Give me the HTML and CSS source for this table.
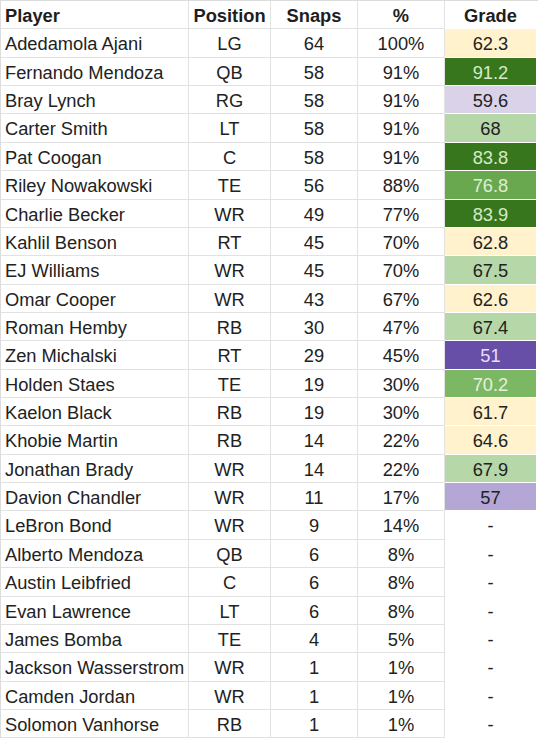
FILE: index.html
```html
<!DOCTYPE html>
<html>
<head>
<meta charset="utf-8">
<link rel="stylesheet" href="styles.css">
</head>
<body>
<div class="sheet">
  <div class="row head"><div class="c name">Player</div><div class="c">Position</div><div class="c">Snaps</div><div class="c">%</div><div class="c g"><span class="gv">Grade</span></div></div>
  <div class="row"><div class="c name">Adedamola Ajani</div><div class="c">LG</div><div class="c">64</div><div class="c">100%</div><div class="c g"><span class="gv y">62.3</span></div></div>
  <div class="row"><div class="c name">Fernando Mendoza</div><div class="c">QB</div><div class="c">58</div><div class="c">91%</div><div class="c g"><span class="gv dg">91.2</span></div></div>
  <div class="row"><div class="c name">Bray Lynch</div><div class="c">RG</div><div class="c">58</div><div class="c">91%</div><div class="c g"><span class="gv lp">59.6</span></div></div>
  <div class="row"><div class="c name">Carter Smith</div><div class="c">LT</div><div class="c">58</div><div class="c">91%</div><div class="c g"><span class="gv lg">68</span></div></div>
  <div class="row"><div class="c name">Pat Coogan</div><div class="c">C</div><div class="c">58</div><div class="c">91%</div><div class="c g"><span class="gv dg">83.8</span></div></div>
  <div class="row"><div class="c name">Riley Nowakowski</div><div class="c">TE</div><div class="c">56</div><div class="c">88%</div><div class="c g"><span class="gv mg">76.8</span></div></div>
  <div class="row"><div class="c name">Charlie Becker</div><div class="c">WR</div><div class="c">49</div><div class="c">77%</div><div class="c g"><span class="gv dg">83.9</span></div></div>
  <div class="row"><div class="c name">Kahlil Benson</div><div class="c">RT</div><div class="c">45</div><div class="c">70%</div><div class="c g"><span class="gv y">62.8</span></div></div>
  <div class="row"><div class="c name">EJ Williams</div><div class="c">WR</div><div class="c">45</div><div class="c">70%</div><div class="c g"><span class="gv lg">67.5</span></div></div>
  <div class="row"><div class="c name">Omar Cooper</div><div class="c">WR</div><div class="c">43</div><div class="c">67%</div><div class="c g"><span class="gv y">62.6</span></div></div>
  <div class="row"><div class="c name">Roman Hemby</div><div class="c">RB</div><div class="c">30</div><div class="c">47%</div><div class="c g"><span class="gv lg">67.4</span></div></div>
  <div class="row"><div class="c name">Zen Michalski</div><div class="c">RT</div><div class="c">29</div><div class="c">45%</div><div class="c g"><span class="gv dp">51</span></div></div>
  <div class="row"><div class="c name">Holden Staes</div><div class="c">TE</div><div class="c">19</div><div class="c">30%</div><div class="c g"><span class="gv mg2">70.2</span></div></div>
  <div class="row"><div class="c name">Kaelon Black</div><div class="c">RB</div><div class="c">19</div><div class="c">30%</div><div class="c g"><span class="gv y">61.7</span></div></div>
  <div class="row"><div class="c name">Khobie Martin</div><div class="c">RB</div><div class="c">14</div><div class="c">22%</div><div class="c g"><span class="gv y">64.6</span></div></div>
  <div class="row"><div class="c name">Jonathan Brady</div><div class="c">WR</div><div class="c">14</div><div class="c">22%</div><div class="c g"><span class="gv lg">67.9</span></div></div>
  <div class="row"><div class="c name">Davion Chandler</div><div class="c">WR</div><div class="c">11</div><div class="c">17%</div><div class="c g"><span class="gv mp">57</span></div></div>
  <div class="row"><div class="c name">LeBron Bond</div><div class="c">WR</div><div class="c">9</div><div class="c">14%</div><div class="c g"><span class="gv">-</span></div></div>
  <div class="row"><div class="c name">Alberto Mendoza</div><div class="c">QB</div><div class="c">6</div><div class="c">8%</div><div class="c g"><span class="gv">-</span></div></div>
  <div class="row"><div class="c name">Austin Leibfried</div><div class="c">C</div><div class="c">6</div><div class="c">8%</div><div class="c g"><span class="gv">-</span></div></div>
  <div class="row"><div class="c name">Evan Lawrence</div><div class="c">LT</div><div class="c">6</div><div class="c">8%</div><div class="c g"><span class="gv">-</span></div></div>
  <div class="row"><div class="c name">James Bomba</div><div class="c">TE</div><div class="c">4</div><div class="c">5%</div><div class="c g"><span class="gv">-</span></div></div>
  <div class="row"><div class="c name">Jackson Wasserstrom</div><div class="c">WR</div><div class="c">1</div><div class="c">1%</div><div class="c g"><span class="gv">-</span></div></div>
  <div class="row"><div class="c name">Camden Jordan</div><div class="c">WR</div><div class="c">1</div><div class="c">1%</div><div class="c g"><span class="gv">-</span></div></div>
  <div class="row"><div class="c name">Solomon Vanhorse</div><div class="c">RB</div><div class="c">1</div><div class="c">1%</div><div class="c g"><span class="gv">-</span></div></div>
</div>
</body>
</html>
```
FILE: styles.css
```css
html, body {
  margin: 0;
  padding: 0;
  background: #ffffff;
}
.sheet {
  width: 538px;
  border-top: 1px solid #dcdcdc;
  border-left: 1px solid #dcdcdc;
  box-sizing: border-box;
  font-family: "Liberation Sans", Arial, sans-serif;
  font-size: 18.3px;
  color: #222222;
}
.row {
  display: grid;
  grid-template-columns: 188px 82px 87px 87px 1fr;
  height: 28.36px;
}
.c {
  box-sizing: border-box;
  border-right: 1px solid #e2e2e2;
  border-bottom: 1px solid #e2e2e2;
  text-align: center;
  line-height: 27px;
  padding-top: 1px;
  white-space: nowrap;
  overflow: hidden;
}
.c.name {
  text-align: left;
  padding-left: 4px;
}
.head .c {
  font-weight: bold;
  color: #1e1e1e;
}
.c.g {
  border-right: none;
  border-bottom: none;
  padding: 0 2px 1px 0;
  display: flex;
}
.gv {
  flex: 1;
  display: block;
  line-height: 27px;
  padding-top: 1px;
  text-align: center;
}
.y { background: #fff2cc; }
.dg { background: #38761d; color: #d4ebc6; }
.mg { background: #6aa84f; color: #dcefd2; }
.mg2 { background: #7cb764; color: #e3f2db; }
.lg { background: #b6d7a8; }
.lp { background: #d9d2e9; }
.mp { background: #b4a7d6; }
.dp { background: #674ea7; color: #e6def7; }
```
